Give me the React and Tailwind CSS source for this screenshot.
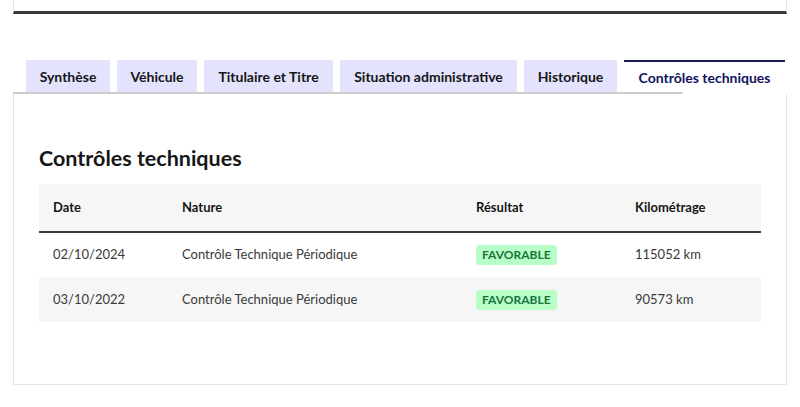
import React from 'react';

const tabs = [
  { label: 'Synthèse', w: 'w-[84px]' },
  { label: 'Véhicule', w: 'w-[80px]' },
  { label: 'Titulaire et Titre', w: 'w-[129px]' },
  { label: 'Situation administrative', w: 'w-[177px]' },
  { label: 'Historique', w: 'w-[93px]' },
];

const rows = [
  { date: '02/10/2024', nature: 'Contrôle Technique Périodique', km: '115052 km' },
  { date: '03/10/2022', nature: 'Contrôle Technique Périodique', km: '90573 km' },
];

export default function App() {
  return (
    <div className="min-h-screen bg-white text-[#161616] font-['Lato','Liberation_Sans',sans-serif]">
      <div className="ml-[13px] w-[774px]">
        {/* bandeau du haut */}
        <div className="h-[14px] border-x border-[#e5e5e5] border-b-[3px] border-b-[#3a3a3a]" />

        {/* onglets */}
        <div className="mt-[46px] flex items-end gap-[7px] pl-[13px]">
          {tabs.map((t) => (
            <div
              key={t.label}
              className={`${t.w} h-[32px] flex items-center justify-center bg-[#e3e3fd] text-[14px] font-bold`}
            >
              {t.label}
            </div>
          ))}
          <div className="w-[161px] h-[32px] flex items-center justify-center bg-white border-t-2 border-[#1a1a5e] text-[14px] font-bold text-[#12125e]">
            Contrôles techniques
          </div>
        </div>
        <div className="h-[2px] w-[670px] bg-[#cecece]" />

        {/* panneau */}
        <div className="border-x border-b border-[#e5e5e5] px-[25px] pt-[50px] pb-[62px]">
          <h2 className="text-[21.5px] font-bold leading-[28px] text-[#161616]">Contrôles techniques</h2>
          <table className="mt-[12px] w-[722px] text-[13px] border-collapse">
            <thead>
              <tr className="bg-[#f6f6f6] border-b-2 border-[#3a3a3a] h-[48px]">
                <th className="w-[129px] pl-[14px] text-left font-bold">Date</th>
                <th className="w-[294px] pl-[14px] text-left font-bold">Nature</th>
                <th className="w-[159px] pl-[14px] text-left font-bold">Résultat</th>
                <th className="w-[140px] pl-[14px] text-left font-bold">Kilométrage</th>
              </tr>
            </thead>
            <tbody className="text-[#3a3a3a]">
              {rows.map((r, i) => (
                <tr key={r.date} className={`h-[45px] ${i % 2 ? 'bg-[#f6f6f6]' : 'bg-white'}`}>
                  <td className="pl-[14px]">{r.date}</td>
                  <td className="pl-[14px]">{r.nature}</td>
                  <td className="pl-[14px]">
                    <span className="inline-block rounded-[4px] bg-[#b8fec9] px-[6px] text-[12px] leading-[20px] font-bold text-[#18753c] uppercase">
                      Favorable
                    </span>
                  </td>
                  <td className="pl-[14px]">{r.km}</td>
                </tr>
              ))}
            </tbody>
          </table>
        </div>
      </div>
    </div>
  );
}
